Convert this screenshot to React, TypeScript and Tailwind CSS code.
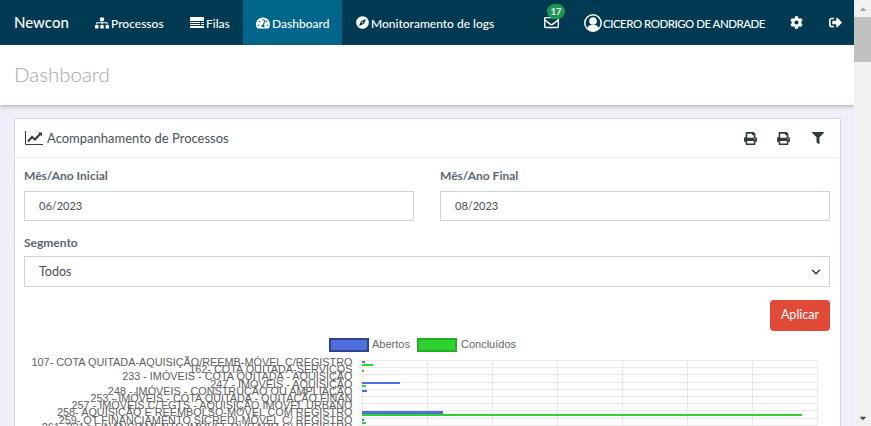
import { FaSitemap, FaTachometerAlt, FaCompass, FaRegEnvelope, FaCog, FaSignOutAlt, FaPrint, FaFilter, FaCaretUp, FaCaretDown } from 'react-icons/fa';
import { ChevronDown } from 'lucide-react';
import type { ReactNode } from 'react';

function QueueIcon() {
  return (
    <svg width={14} height={11} viewBox="0 0 14 11" fill="white">
      <rect x={0} y={0} width={14} height={4} />
      <rect x={0} y={5} width={10} height={1} />
      <rect x={11} y={5} width={3} height={1} />
      <rect x={0} y={7} width={10} height={1} />
      <rect x={11} y={7} width={3} height={1} />
      <rect x={0} y={9} width={14} height={2} />
    </svg>
  );
}

function UserIcon() {
  return (
    <svg width={18} height={18} viewBox="0 0 18 18" fill="white">
      <circle cx={9} cy={9} r={8.2} fill="none" stroke="white" strokeWidth={1.5} />
      <circle cx={9} cy={7} r={3.8} />
      <path d="M3.2 14.4C4 11.8 6 10.8 9 10.8s5 1 5.8 3.6C13.4 16 11.4 17 9 17s-4.4-1-5.8-2.6z" />
    </svg>
  );
}

function LineChartIcon() {
  return (
    <svg width={18} height={14} viewBox="0 0 18 14" className="text-[#343a40]">
      <path d="M0.5 0V13.5H18" fill="none" stroke="currentColor" strokeWidth={1} />
      <path d="M3 10.5L7 6L10 8.5L15.5 2.5" fill="none" stroke="currentColor" strokeWidth={2} />
      <path d="M13 1.5H17V5.5z" fill="currentColor" />
    </svg>
  );
}

const navItems: { label: string; icon: ReactNode; box: string; active?: boolean }[] = [
  { label: 'Processos', icon: <FaSitemap size={14} />, box: 'w-[95px]' },
  { label: 'Filas', icon: <QueueIcon />, box: 'w-[53px]' },
  { label: 'Dashboard', icon: <FaTachometerAlt size={14} />, box: 'w-[99px] pl-[13px]', active: true },
  { label: 'Monitoramento de logs', icon: <FaCompass size={13} />, box: 'w-[202px] pl-[14px]' },
];

const chartLabels = [
  '107- COTA QUITADA-AQUISIÇÃO/REEMB-MÓVEL C/REGISTRO',
  '162- COTA QUITADA-SERVIÇOS',
  '233 - IMÓVEIS - COTA QUITADA - AQUISIÇÃO',
  '247 - IMÓVEIS - AQUISIÇÃO',
  '248 - IMÓVEIS - CONSTRUÇÃO OU AMPLIAÇÃO',
  '253 - IMÓVEIS - COTA QUITADA - QUITAÇÃO FINAN',
  '257 - IMÓVEIS C/ FGTS - AQUISIÇÃO IMÓVEL URBANO',
  '258- AQUISIÇÃO E REEMBOLSO-MÓVEL COM REGISTRO',
  '259- QT FINANCIAMENTO SICREDI-MÓVEL C/ REGISTRO',
  '261- 231 - FINANCIAMENTO IMÓVEL QUITADO C/ REGISTRO',
];

const chartBars = [
  { x: 362, y: 361, w: 3, h: 2, fill: '#4f6fdc' },
  { x: 362, y: 364, w: 11, h: 2, fill: '#2fd12f' },
  { x: 362, y: 370, w: 2, h: 2, fill: '#2fd12f' },
  { x: 362, y: 382, w: 38, h: 2, fill: '#4f6fdc' },
  { x: 362, y: 385, w: 4, h: 2, fill: '#2fd12f' },
  { x: 362, y: 390, w: 5, h: 2, fill: '#4f6fdc' },
  { x: 362, y: 411, w: 81, h: 3, fill: '#4f6fdc' },
  { x: 362, y: 414, w: 440, h: 2, fill: '#2fd12f' },
  { x: 362, y: 419, w: 2, h: 2, fill: '#4f6fdc' },
  { x: 362, y: 422, w: 4, h: 2, fill: '#2fd12f' },
];

function Field({ label, value }: { label: string; value: string }) {
  return (
    <div className="flex-1">
      <div className="text-[12px] leading-[18px] font-bold text-[#5a6770]">{label}</div>
      <div className="mt-[6px] h-[30px] border border-[#ced4da] px-[14px] flex items-center text-[11px] text-[#495057]">
        {value}
      </div>
    </div>
  );
}

export default function App() {
  return (
    <div className="h-screen flex overflow-hidden bg-[#f1f1f1] font-['Lato',sans-serif]">
      <div className="w-[854px] shrink-0 flex flex-col bg-[#eeeff8]">
        {/* Navbar */}
        <nav className="h-[45px] shrink-0 bg-[#003a52] flex items-center text-white text-[12px] font-medium">
          <span className="w-[95px] pl-[14px] text-[15px]">Newcon</span>
          {navItems.map((item) => (
            <div
              key={item.label}
              className={`h-full flex items-center gap-[2px] whitespace-nowrap ${item.box} ${item.active ? 'bg-[#00658a]' : ''}`}
            >
              {item.icon}
              <span className="pt-[2px]">{item.label}</span>
            </div>
          ))}
          <div className="relative w-[40px] h-full flex items-center">
            <FaRegEnvelope size={15} />
            <span className="absolute top-[4px] left-[3px] w-[18px] h-[15px] rounded-full bg-[#17994f] text-[9px] font-bold leading-[15px] text-center">
              17
            </span>
          </div>
          <div className="w-[206px] flex items-center gap-px whitespace-nowrap">
            <UserIcon />
            <span className="pt-[2px] text-[11.5px] tracking-[-0.5px]">CICERO RODRIGO DE ANDRADE</span>
          </div>
          <div className="w-[39px]">
            <FaCog size={13} />
          </div>
          <FaSignOutAlt size={13} />
        </nav>

        {/* Title */}
        <div className="h-[60px] shrink-0 bg-white shadow-[0_1px_4px_rgba(90,90,120,0.5)] flex items-center pl-[14px] pb-[2px] text-[20.5px] font-light text-[#a2a7ad]">
          Dashboard
        </div>

        {/* Card */}
        <div className="mt-[13px] ml-[14px] w-[827px] flex-1 min-h-0 overflow-hidden bg-white border border-[#d5d8e2] border-b-0 rounded-t-[2px]">
          <div className="h-[39px] border-b border-[#f2f2f2] flex items-center pl-[10px] pr-[16px] text-[#4a5259]">
            <LineChartIcon />
            <span className="ml-[4px] pt-[2px] text-[13px]">Acompanhamento de Processos</span>
            <div className="ml-auto flex items-center text-[#343a40]">
              <FaPrint size={13} />
              <FaPrint size={13} className="ml-[20px]" />
              <FaFilter size={12} className="ml-[22px]" />
            </div>
          </div>
          <div className="pl-[9px] pr-[10px] pt-[9px]">
            <div className="flex gap-[26px]">
              <Field label="Mês/Ano Inicial" value="06/2023" />
              <Field label="Mês/Ano Final" value="08/2023" />
            </div>
            <div className="mt-[13px] text-[12px] leading-[18px] font-bold text-[#5a6770]">Segmento</div>
            <div className="mt-[4px] h-[31px] border border-[#ced4da] px-[14px] flex items-center justify-between text-[12.5px] text-[#495057]">
              <span className="pt-px">Todos</span>
              <ChevronDown size={14} strokeWidth={2.5} className="-mr-[8px] text-[#343a40]" />
            </div>
            <div className="mt-[13px] flex justify-end">
              <div className="w-[60px] h-[31px] rounded-[4px] bg-[#e14a36] text-white text-[12.5px] flex items-center justify-center">
                Aplicar
              </div>
            </div>

            {/* Chart: the viewBox keeps the numbers in page pixels */}
            <svg className="block mt-[5px]" width={806} height={90} viewBox="24 336 806 90">
              <rect x={330} y={339} width={38} height={12} fill="#4f6fdc" stroke="#2f4488" strokeWidth={2} />
              <text x={372} y={348} fontFamily="'Liberation Sans'" fontSize={11} fill="#666">Abertos</text>
              <rect x={418} y={339} width={38} height={12} fill="#2fd12f" stroke="#22b022" strokeWidth={2} />
              <text x={461} y={348} fontFamily="'Liberation Sans'" fontSize={11} fill="#666">Concluídos</text>
              {[362, 427, 492, 557, 622, 687, 752, 817].map((x) => (
                <line key={x} x1={x + 0.5} y1={360} x2={x + 0.5} y2={426} stroke="#e9e9e9" />
              ))}
              {chartLabels.map((_, i) => (
                <line key={i} x1={358} y1={360.5 + Math.round(i * 7.2)} x2={817} y2={360.5 + Math.round(i * 7.2)} stroke="#e9e9e9" />
              ))}
              {chartLabels.map((label, i) => (
                <text key={label} x={352.5} y={366 + i * 7.2} textAnchor="end" fontFamily="'Liberation Sans'" fontSize={10.85} fill="#606060">
                  {label}
                </text>
              ))}
              {chartBars.map((b, i) => (
                <rect key={i} x={b.x} y={b.y} width={b.w} height={b.h} fill={b.fill} />
              ))}
            </svg>
          </div>
        </div>
      </div>

      {/* Browser scrollbar */}
      <div className="w-[17px] shrink-0 flex flex-col items-center bg-[#f1f1f1] text-[#505050]">
        <div className="h-[17px] flex items-center justify-center">
          <FaCaretUp size={10} className="text-[#a3a3a3]" />
        </div>
        <div className="w-full h-[45px] bg-[#c1c1c1]" />
        <div className="mt-auto h-[17px] flex items-center justify-center">
          <FaCaretDown size={10} />
        </div>
      </div>
    </div>
  );
}
